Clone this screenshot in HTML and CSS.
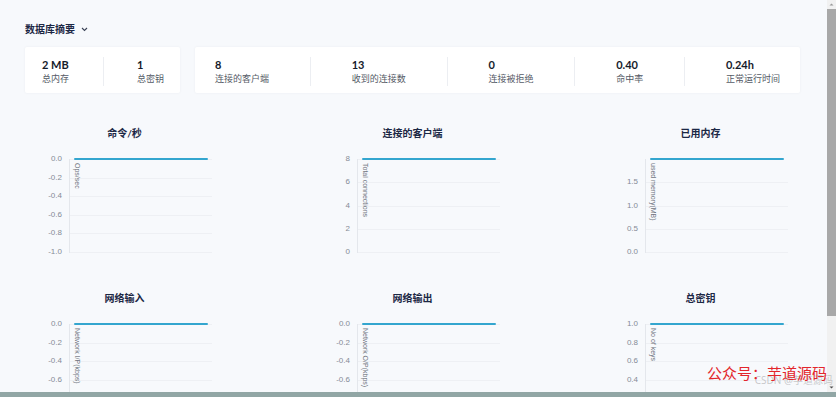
FILE: index.html
```html
<!DOCTYPE html>
<html lang="zh-CN">
<head>
<meta charset="utf-8">
<title>数据库摘要</title>
<link rel="stylesheet" href="styles.css">
</head>
<body>
<div class="app">
  <main class="main">
    <h1 class="page-title">数据库摘要
      <svg class="chev" width="7" height="5" viewBox="0 0 7 5"><polyline points="1,1 3.5,3.5 6,1" fill="none" stroke="#3a4256" stroke-width="1.1"/></svg>
    </h1>
    <div class="stats">
      <div class="card card-sm">
        <div class="stat"><div class="val">2 MB</div><div class="lbl">总内存</div></div>
        <div class="sep"></div>
        <div class="stat"><div class="val">1</div><div class="lbl">总密钥</div></div>
      </div>
      <div class="card card-lg">
        <div class="stat"><div class="val">8</div><div class="lbl">连接的客户端</div></div>
        <div class="sep"></div>
        <div class="stat"><div class="val">13</div><div class="lbl">收到的连接数</div></div>
        <div class="sep"></div>
        <div class="stat"><div class="val">0</div><div class="lbl">连接被拒绝</div></div>
        <div class="sep"></div>
        <div class="stat"><div class="val">0.40</div><div class="lbl">命中率</div></div>
        <div class="sep"></div>
        <div class="stat"><div class="val">0.24h</div><div class="lbl">正常运行时间</div></div>
      </div>
    </div>

    <div class="charts">
      <section class="chart">
        <h2 class="chart-title">命令/秒</h2>
        <div class="plot">
          <div class="ticks">
            <div class="tick"><span>0.0</span></div>
            <div class="tick"><span>-0.2</span></div>
            <div class="tick"><span>-0.4</span></div>
            <div class="tick"><span>-0.6</span></div>
            <div class="tick"><span>-0.8</span></div>
            <div class="tick"><span>-1.0</span></div>
          </div>
          <div class="series"></div>
          <div class="ylabel">Ops/sec</div>
        </div>
      </section>
      <section class="chart">
        <h2 class="chart-title">连接的客户端</h2>
        <div class="plot">
          <div class="ticks">
            <div class="tick"><span>8</span></div>
            <div class="tick"><span>6</span></div>
            <div class="tick"><span>4</span></div>
            <div class="tick"><span>2</span></div>
            <div class="tick"><span>0</span></div>
          </div>
          <div class="series"></div>
          <div class="ylabel">Total connections</div>
        </div>
      </section>
      <section class="chart">
        <h2 class="chart-title">已用内存</h2>
        <div class="plot">
          <div class="ticks">
            <div class="tick tick-blank"><span></span></div>
            <div class="tick"><span>1.5</span></div>
            <div class="tick"><span>1.0</span></div>
            <div class="tick"><span>0.5</span></div>
            <div class="tick"><span>0.0</span></div>
          </div>
          <div class="series"></div>
          <div class="ylabel">used memory(MB)</div>
        </div>
      </section>

      <section class="chart">
        <h2 class="chart-title">网络输入</h2>
        <div class="plot">
          <div class="ticks">
            <div class="tick"><span>0.0</span></div>
            <div class="tick"><span>-0.2</span></div>
            <div class="tick"><span>-0.4</span></div>
            <div class="tick"><span>-0.6</span></div>
            <div class="tick"><span>-0.8</span></div>
            <div class="tick"><span>-1.0</span></div>
          </div>
          <div class="series"></div>
          <div class="ylabel">Network I/P(kbps)</div>
        </div>
      </section>
      <section class="chart">
        <h2 class="chart-title">网络输出</h2>
        <div class="plot">
          <div class="ticks">
            <div class="tick"><span>0.0</span></div>
            <div class="tick"><span>-0.2</span></div>
            <div class="tick"><span>-0.4</span></div>
            <div class="tick"><span>-0.6</span></div>
            <div class="tick"><span>-0.8</span></div>
            <div class="tick"><span>-1.0</span></div>
          </div>
          <div class="series"></div>
          <div class="ylabel">Network O/P(kbps)</div>
        </div>
      </section>
      <section class="chart">
        <h2 class="chart-title">总密钥</h2>
        <div class="plot">
          <div class="ticks">
            <div class="tick"><span>1.0</span></div>
            <div class="tick"><span>0.8</span></div>
            <div class="tick"><span>0.6</span></div>
            <div class="tick"><span>0.4</span></div>
            <div class="tick"><span>0.2</span></div>
            <div class="tick"><span>0.0</span></div>
          </div>
          <div class="series"></div>
          <div class="ylabel">No of keys</div>
        </div>
      </section>
    </div>
  </main>

  <div class="scrollbar">
    <div class="sb-btn"><svg width="9" height="9" viewBox="0 0 9 9"><polygon points="2.5,5.5 4.5,3.5 6.5,5.5" fill="#9a9a9a"/></svg></div>
    <div class="sb-thumb"></div>
    <div class="sb-track"></div>
    <div class="sb-btn"><svg width="9" height="9" viewBox="0 0 9 9"><polygon points="2.5,3.5 4.5,5.5 6.5,3.5" fill="#505050"/></svg></div>
  </div>

  <div class="watermark">
    <span class="wm-faint">CSDN @芋道源码</span>
    <span class="wm-red">公众号：芋道源码</span>
  </div>
</div>
<div class="taskbar"></div>
</body>
</html>
```

FILE: styles.css
```css
* { box-sizing: border-box; }

html, body {
  margin: 0;
  padding: 0;
  height: 100%;
  overflow: hidden;
}

body {
  display: flex;
  flex-direction: column;
  background: #f7f9fc;
  font-family: "Lato", "Noto Sans CJK SC", sans-serif;
  color: #1d2433;
}

.app {
  position: relative;
  display: flex;
  height: 392px;
  overflow: hidden;
  background: #f7f9fc;
}

.main {
  flex: 1;
  padding: 22px 27px 0 25px;
  min-width: 0;
}

.page-title {
  margin: 0 0 11px;
  display: flex;
  align-items: center;
  gap: 6px;
  font-size: 10px;
  line-height: 14px;
  font-weight: 700;
  color: #1c2845;
}

.chev { display: block; margin-top: 1px; }

.stats {
  display: flex;
  gap: 15px;
}

.card {
  display: flex;
  justify-content: space-between;
  align-items: flex-start;
  height: 46px;
  padding-top: 10px;
  background: #ffffff;
  border-radius: 2px;
  box-shadow: 0 0 3px rgba(20, 30, 60, 0.05);
}

.card-sm {
  width: 155px;
  padding-left: 17px;
  padding-right: 16px;
}

.card-lg {
  flex: 1;
  padding-left: 20px;
  padding-right: 20px;
}

.stat { flex: 0 0 auto; }

.val {
  font-size: 11px;
  line-height: 15px;
  font-weight: 700;
  color: #151b2b;
}

.lbl {
  font-size: 9px;
  line-height: 13px;
  color: #555b66;
  white-space: nowrap;
}

.sep {
  flex: 0 0 1px;
  width: 1px;
  height: 29px;
  background: #eceef2;
}

.charts {
  margin-top: 33px;
  padding-left: 12px;
  display: grid;
  grid-template-columns: repeat(3, 175px);
  column-gap: 113px;
  row-gap: 38px;
}

.chart {
  display: flex;
  flex-direction: column;
}

.chart-title {
  margin: 0 0 19px;
  text-align: center;
  font-size: 10px;
  line-height: 14px;
  font-weight: 700;
  color: #1c2845;
}

.plot {
  position: relative;
  margin-left: 32px;
  width: 143px;
  height: 94px;
  border-left: 1px solid #e4e7ec;
}

.ticks {
  height: 100%;
  display: flex;
  flex-direction: column;
  justify-content: space-between;
}

.tick {
  position: relative;
  height: 1px;
  background: #eef0f4;
}

.tick span {
  position: absolute;
  right: calc(100% + 8px);
  top: -5px;
  font-family: "Liberation Sans", "Noto Sans", sans-serif;
  font-size: 8px;
  line-height: 10px;
  color: #858b96;
  white-space: nowrap;
}

.tick-blank { background: transparent; }

.series {
  position: absolute;
  top: -1px;
  left: 4px;
  right: 4px;
  height: 2.4px;
  background: #34a6cf;
  border-radius: 1px;
}

.ylabel {
  position: absolute;
  top: 4px;
  left: 3px;
  writing-mode: vertical-rl;
  font-family: "Liberation Sans", "Noto Sans", sans-serif;
  font-size: 7px;
  line-height: 8px;
  color: #6f747e;
  white-space: nowrap;
}

.scrollbar {
  flex: 0 0 9px;
  display: flex;
  flex-direction: column;
  background: #f1f1f1;
}

.sb-btn {
  flex: 0 0 9px;
  height: 9px;
}

.sb-btn svg { display: block; }

.sb-thumb {
  flex: 0 0 307px;
  background: #a8a8a8;
}

.sb-track { flex: 1; }

.watermark {
  position: absolute;
  right: 9px;
  bottom: 6px;
  width: 130px;
  height: 22px;
  pointer-events: none;
}

.wm-faint {
  position: absolute;
  right: -6px;
  bottom: 0;
  font-family: "Noto Sans", "Noto Sans CJK SC", sans-serif;
  font-size: 10px;
  line-height: 12px;
  color: rgba(140, 140, 140, 0.45);
  white-space: nowrap;
}

.wm-red {
  position: absolute;
  right: 0;
  top: 0;
  font-family: "Noto Sans CJK SC", sans-serif;
  font-size: 15px;
  line-height: 18px;
  color: #e3262b;
  white-space: nowrap;
}

.taskbar {
  flex: 0 0 5px;
  background: #91a6a5;
  box-shadow: 0 -1px 2px rgba(60, 80, 80, 0.25);
}
```
